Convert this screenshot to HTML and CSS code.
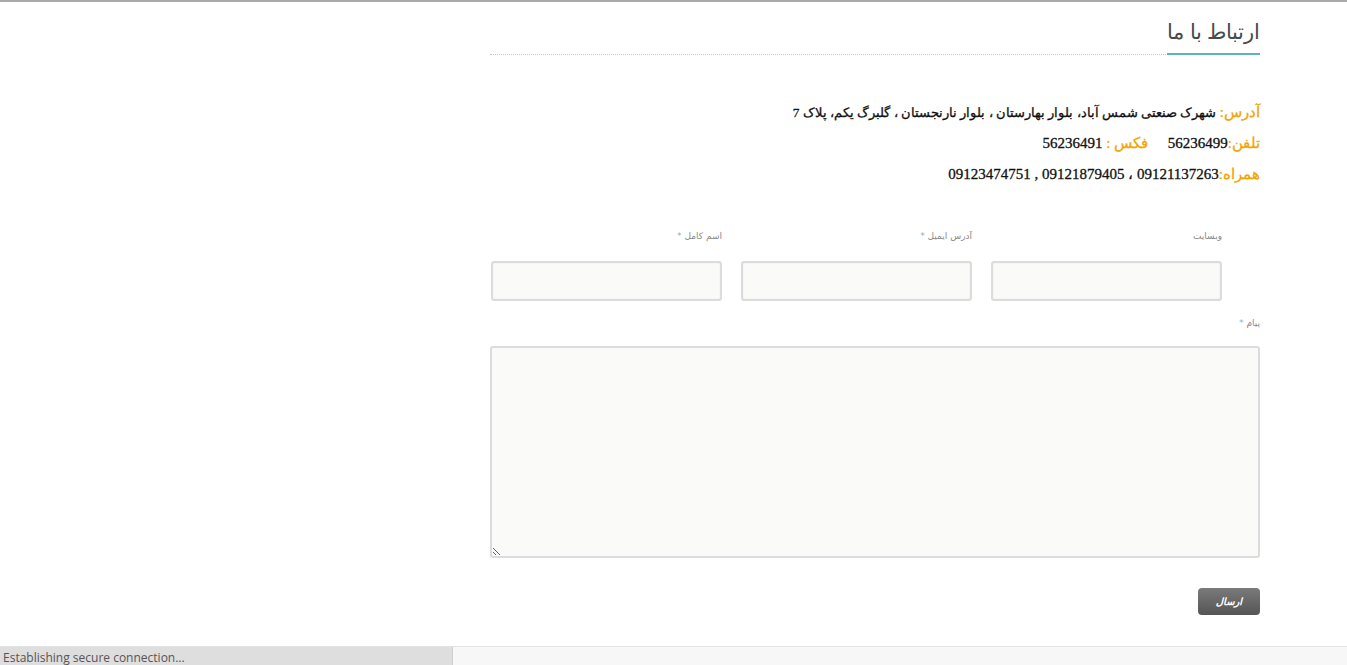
FILE: index.html
```html
<!DOCTYPE html>
<html lang="fa">
<head>
<meta charset="utf-8">
<link rel="stylesheet" href="styles.css">
</head>
<body>
<div class="topline"></div>
<main class="page" dir="rtl">
  <div class="heading"><h1 class="title">ارتباط با ما</h1></div>
  <div class="info">
    <p class="addr"><span class="lbl">آدرس:</span> شهرک صنعتی شمس آباد، بلوار بهارستان ، بلوار نارنجستان ، گلبرگ یکم، پلاک 7</p>
    <p><span class="lbl">تلفن:</span>56236499 <span class="sp"></span><span class="lbl">فکس :</span> 56236491</p>
    <p><span class="lbl">همراه:</span>09121137263 ، 09121879405 , 09123474751</p>
  </div>
  <form class="form">
    <div class="row3">
      <div class="field"><label class="flabel">وبسایت</label><input class="inp" type="text"></div>
      <div class="field"><label class="flabel">آدرس ایمیل <span class="req">*</span></label><input class="inp" type="text"></div>
      <div class="field"><label class="flabel">اسم کامل <span class="req">*</span></label><input class="inp" type="text"></div>
    </div>
    <div class="msg">
      <label class="flabel mlabel">پیام <span class="req">*</span></label>
      <textarea class="ta"></textarea>
    </div>
    <div class="actions"><button type="button" class="btn">ارسال</button></div>
  </form>
</main>
<div class="footer">
  <div class="status">Establishing secure connection...</div>
</div>
</body>
</html>
```
FILE: styles.css
```css
html, body { margin: 0; padding: 0; background: #fff; }
body { font-family: "DejaVu Sans", sans-serif; height: 665px; overflow: hidden; position: relative; }
.topline { height: 2px; background: #a9a9a9; }
.page { width: 770px; margin-left: 490px; }
.heading { height: 52px; border-bottom: 1px dotted #c8c8c8; display: flex; justify-content: flex-start; }
.title {
  margin: 0 0 -2px 0; padding: 14px 0 0 0; height: 37px; box-sizing: content-box;
  font-family: "Open Sans", "DejaVu Sans", sans-serif; font-weight: 300;
  font-size: 21px; line-height: 30px; color: #4a4a4a; white-space: nowrap; text-align: right;
  border-bottom: 2px solid #5bb1cf;
}
.info { padding-top: 42px; font-family: "Liberation Serif", "DejaVu Serif", serif; font-size: 15px; color: #111; }
.info p { margin: 0; height: 31px; line-height: 31px; font-weight: normal; -webkit-text-stroke: 0.3px #111; white-space: nowrap; }
.info p.addr { font-size: 13.3px; }
.lbl { color: #f2a400; -webkit-text-stroke: 0.3px #f2a400; font-size: 15px; }
.sp { display: inline-block; width: 16px; }
.form { padding-top: 40px; }
.row3 { display: flex; gap: 20px; padding-right: 38px; }
.field { width: 230px; display: flex; flex-direction: column; }
.flabel { font-family: "DejaVu Sans", sans-serif; font-size: 9px; color: #8a8a8a; height: 31px; line-height: 12px; text-align: right; }
.mlabel { height: 29px; }
.req { color: #7fb3d0; }
.inp {
  box-sizing: border-box; width: 231px; height: 40px; margin: 0 0 0 -1px;
  border: 2px solid #dcdcdc; border-radius: 3px; background: #fafaf8;
  box-shadow: inset 0 0 1px #ccc;
}
.msg { padding-top: 16px; display: flex; flex-direction: column; }
.ta {
  box-sizing: border-box; width: 770px; height: 212px; margin: 0;
  border: 2px solid #dcdcdc; border-radius: 3px; background: #fafaf8; resize: both;
}
.actions { display: flex; justify-content: flex-start; padding-top: 30px; }
.btn {
  width: 62px; height: 27px; border: none; border-radius: 4px;
  background: linear-gradient(#7a7a7a, #555);
  color: #fff; font-family: "DejaVu Sans", sans-serif; font-size: 10px; font-style: italic; font-weight: bold;
}
.footer {
  position: absolute; left: 0; right: 0; bottom: 0; height: 18px;
  border-top: 1px solid #e3e3e3; background: #f7f7f7;
}
.status {
  width: 453px; height: 18px; background: #dedede; color: #555;
  font-family: "Open Sans", "DejaVu Sans", sans-serif; font-size: 12px; line-height: 22px; padding-left: 3px; box-sizing: border-box;
  border-right: 1px solid #d0d0d0;
}
```
